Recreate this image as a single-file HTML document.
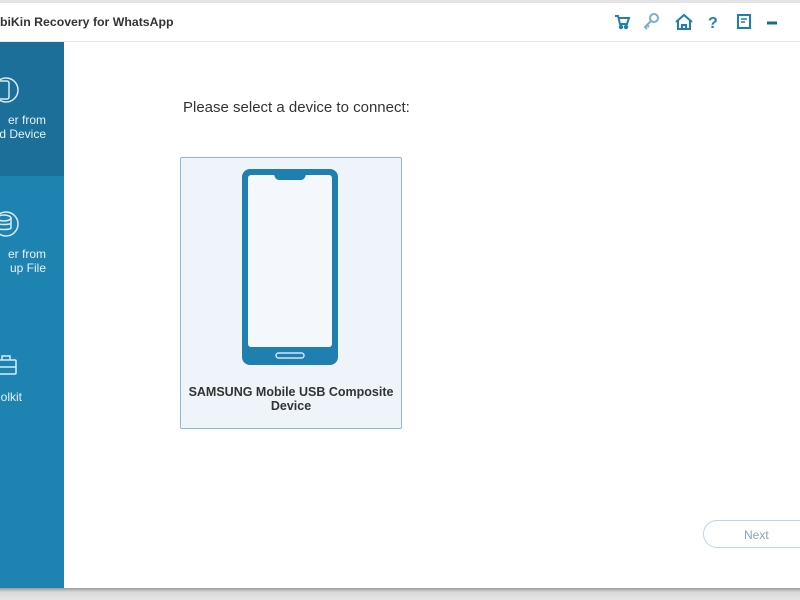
<!DOCTYPE html>
<html><head><style>
body{margin:0;width:800px;height:600px;overflow:hidden;background:#fff;font-family:"Liberation Sans",sans-serif;position:relative}
.top{position:absolute;left:0;top:0;width:800px;height:3px;background:#e4e4e4}
.title{position:absolute;left:0;top:15px;font-size:12.3px;font-weight:bold;color:#333}
.sep{position:absolute;left:0;top:41px;width:800px;height:1px;background:#e8e8e8}
.sb{position:absolute;left:0;top:42px;width:64px;height:546px;background:#1f83b2}
.sb1{position:absolute;left:0;top:42px;width:64px;height:134px;background:#1b6f98}
.lbl{position:absolute;color:#e6f2f8;font-size:12px;line-height:14px;text-align:right;right:754px;white-space:nowrap}
.bot{position:absolute;left:0;top:588px;width:800px;height:12px;background:linear-gradient(#9a9a9a,#d8d8d8 4px,#e6e6e6)}
.q{position:absolute;left:183px;top:99px;font-size:15px;color:#333}
.card{position:absolute;left:180px;top:157px;width:220px;height:270px;border:1px solid #8fb8d6;background:#eef4fa;border-radius:2px}
.dn{position:absolute;left:180px;top:385px;width:222px;text-align:center;font-size:12.5px;font-weight:bold;color:#333;line-height:14px}
.next{position:absolute;left:703px;top:520px;width:110px;height:28px;border:1px solid #bcd6e6;border-radius:15px;color:#8aa4b8;font-size:12px;line-height:28px;box-sizing:border-box;padding-left:40px}
</style></head><body>
<div class="top"></div>
<div class="title">biKin Recovery for WhatsApp</div>
<svg style="position:absolute;left:612px;top:10px" width="180" height="24" viewBox="0 0 180 24" fill="none" stroke="#1f7fb0" stroke-width="2">
<path d="M3 6h3l2 8h7l2-6H7" /><circle cx="9" cy="17" r="1.2" fill="#1f7fb0"/><circle cx="14" cy="17" r="1.2" fill="#1f7fb0"/>
<circle cx="42" cy="8" r="4" stroke="#7aaecb"/><path d="M39 11l-6 6 2 2M35 15l2 2" stroke="#7aaecb"/>
<path d="M64 12l8-7 8 7M66 11v8h12v-8" /><path d="M70 19v-4h4v4"/>
<text x="96" y="18" font-size="16" font-weight="bold" fill="#1f7fb0" stroke="none" font-family="Liberation Sans">?</text>
<rect x="126" y="5" width="12" height="13"/><path d="M129 9h6M129 12h4" stroke-width="1.5"/>
<path d="M155 13h10" stroke-width="3" stroke="#1a6a96"/>
</svg>
<div class="sep"></div>
<div class="sb"></div><div class="sb1"></div>
<svg style="position:absolute;left:0;top:68px" width="22" height="340" fill="none" stroke="#d8ecf6" stroke-width="1.5">
<circle cx="6" cy="22" r="12"/><rect x="-2" y="13" width="11" height="18" rx="2"/>
<circle cx="6" cy="156" r="12"/><ellipse cx="4" cy="150" rx="7" ry="3"/><path d="M-3 150v10c0 2 14 2 14 0v-10M-3 155c0 2 14 2 14 0"/>
<rect x="-4" y="292" width="20" height="14" rx="1"/><path d="M2 292v-4h8v4M-4 299h20"/>
</svg>
<div class="lbl" style="top:113px">er from<br>d Device</div>
<div class="lbl" style="top:247px">er from<br>up File</div>
<div class="lbl" style="top:390px;right:778px">olkit</div>
<div class="q">Please select a device to connect:</div>
<div class="card"></div>
<svg style="position:absolute;left:240px;top:167px" width="100" height="200">
<rect x="2" y="2" width="96" height="196" rx="8" fill="#1f7fb0"/>
<rect x="8" y="8" width="84" height="172" rx="3" fill="#f4f8fc"/>
<path d="M34 7h32q-1 6-5 6H39q-4 0-5-6z" fill="#1f7fb0"/>
<rect x="36" y="186" width="28" height="5" rx="2.5" fill="#1f7fb0" stroke="#cfe4f2" stroke-width="1.5"/>
</svg>
<div class="dn">SAMSUNG Mobile USB Composite<br>Device</div>
<div class="next">Next</div>
<div class="bot"></div>
</body></html>
